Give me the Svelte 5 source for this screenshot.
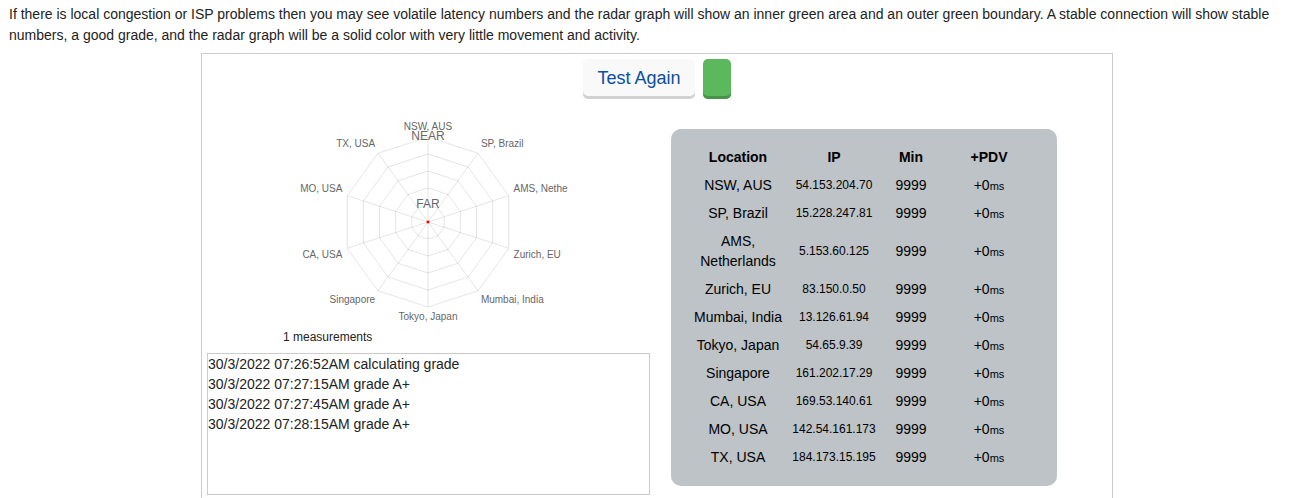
<script lang="ts">
	type Host = { name: string; ip: string; min: number; pdv: number };

	const hosts: Host[] = [
		{ name: 'NSW, AUS', ip: '54.153.204.70', min: 9999, pdv: 0 },
		{ name: 'SP, Brazil', ip: '15.228.247.81', min: 9999, pdv: 0 },
		{ name: 'AMS, Netherlands', ip: '5.153.60.125', min: 9999, pdv: 0 },
		{ name: 'Zurich, EU', ip: '83.150.0.50', min: 9999, pdv: 0 },
		{ name: 'Mumbai, India', ip: '13.126.61.94', min: 9999, pdv: 0 },
		{ name: 'Tokyo, Japan', ip: '54.65.9.39', min: 9999, pdv: 0 },
		{ name: 'Singapore', ip: '161.202.17.29', min: 9999, pdv: 0 },
		{ name: 'CA, USA', ip: '169.53.140.61', min: 9999, pdv: 0 },
		{ name: 'MO, USA', ip: '142.54.161.173', min: 9999, pdv: 0 },
		{ name: 'TX, USA', ip: '184.173.15.195', min: 9999, pdv: 0 }
	];

	let measurements = $state(1);
	let log = $state([
		'30/3/2022 07:26:52AM calculating grade',
		'30/3/2022 07:27:15AM grade A+',
		'30/3/2022 07:27:45AM grade A+',
		'30/3/2022 07:28:15AM grade A+'
	]);

	const cx = 140;
	const cy = 115;
	const radius = 85;
	const rings = [17, 34, 51, 68, 85];

	function point(i: number, r: number) {
		const angle = (i * 2 * Math.PI) / hosts.length;
		return { x: cx + r * Math.sin(angle), y: cy - r * Math.cos(angle) };
	}

	function ring(r: number) {
		return hosts.map((_, i) => `${point(i, r).x},${point(i, r).y}`).join(' ');
	}

	const labels = hosts.map((host, i) => {
		const { x, y } = point(i, radius + 5);
		const side = Math.round(x - cx);
		return {
			// long names are cut on the chart
			text: host.name.length > 13 ? host.name.slice(0, 10) : host.name,
			x,
			y: Math.round(y < cy ? y - 2 : y + 8),
			anchor: side === 0 ? 'middle' : side > 0 ? 'start' : 'end'
		} as const;
	});

	function restart() {
		measurements = 0;
		log = [];
	}
</script>

<p class="intro">
	If there is local congestion or ISP problems then you may see volatile latency numbers and the
	radar graph will show an inner green area and an outer green boundary. A stable connection will
	show stable numbers, a good grade, and the radar graph will be a solid color with very little
	movement and activity.
</p>

<div class="page">
	<main>
		<div class="actions">
			<button class="again" onclick={restart}>Test Again</button>
			<button class="grade" aria-label="Grade"></button>
		</div>
		<div class="columns">
			<section class="left">
				<div class="chart">
					<svg width="280" height="220" viewBox="0 0 280 220" role="img" aria-label="Latency radar">
						<g class="grid">
							{#each rings as r}
								<polygon points={ring(r)} />
							{/each}
							{#each hosts as _, i}
								<line x1={cx} y1={cy} x2={point(i, radius).x} y2={point(i, radius).y} />
							{/each}
						</g>
						<text class="scale" x={cx} y="33">NEAR</text>
						<text class="scale" x={cx} y="101">FAR</text>
						{#each labels as label}
							<text class="label" x={label.x} y={label.y} text-anchor={label.anchor}>{label.text}</text>
						{/each}
						<circle cx={cx} cy={cy} r="2" fill="#f99" />
						<rect x={cx - 1} y={cy - 1} width="2" height="2" fill="#d00" />
					</svg>
					<div class="count">{measurements} measurements</div>
				</div>
				<div class="log" role="log">
					{#each log as line}
						<div>{line}</div>
					{/each}
				</div>
			</section>
			<section class="card">
				<table>
					<thead>
						<tr>
							<th class="location">Location</th>
							<th class="ip">IP</th>
							<th class="min">Min</th>
							<th class="pdv">+PDV</th>
						</tr>
					</thead>
					<tbody>
						{#each hosts as host}
							<tr>
								<td>{host.name}</td>
								<td class="address">{host.ip}</td>
								<td>{host.min}</td>
								<td>+{host.pdv}<span class="unit">ms</span></td>
							</tr>
						{/each}
					</tbody>
				</table>
			</section>
		</div>
	</main>
</div>

<style>
	:global(body) {
		margin: 0;
		background: #fff;
		color: #222;
		font-family: 'Liberation Sans', Arial, sans-serif;
		font-size: 14px;
		line-height: 20px;
	}

	.intro {
		margin: 0;
		padding: 4px 9px 7px;
		line-height: 21px;
	}

	.page {
		padding-left: 19px;
	}

	main {
		box-sizing: border-box;
		max-width: 912px;
		margin: 0 auto;
		padding: 5px 5px 12px;
		border: 1px solid #ccc;
	}

	.actions {
		display: flex;
		justify-content: center;
		gap: 8px;
		margin-bottom: 8px;
	}

	button {
		height: 40px;
		padding: 0 14px 2px;
		border: none;
		border-radius: 5px;
		font-family: inherit;
		font-size: 18px;
		cursor: pointer;
	}

	.again {
		background: #f9f9f9;
		color: #0a4fa0;
		box-shadow: inset 0 -3px #d2d2d2;
	}

	.grade {
		background: #5cb85c;
		box-shadow: inset 0 -3px #4a934a;
	}

	.columns {
		display: flex;
		align-items: flex-start;
		gap: 21px;
	}

	.left {
		flex: 0 1 443px;
		min-width: 0;
	}

	.chart {
		padding-left: 76px;
		margin-bottom: 6px;
	}

	svg {
		display: block;
		margin-left: 5px;
	}

	.grid {
		fill: none;
		stroke: rgba(0, 0, 0, 0.1);
		stroke-width: 1;
	}

	.scale {
		fill: #666;
		font-size: 12px;
		text-anchor: middle;
	}

	.label {
		fill: #666;
		font-size: 10px;
	}

	.count {
		font-size: 12px;
	}

	.log {
		height: 140px;
		overflow-y: auto;
		border: 1px solid #ccc;
	}

	.card {
		box-sizing: border-box;
		margin-top: 22px;
		padding: 14px 19px 15px;
		border-radius: 10px;
		background: #bdc3c7;
		color: #000;
	}

	table {
		width: 348px;
		table-layout: fixed;
		border-collapse: collapse;
		text-align: center;
	}

	th,
	td {
		padding: 4px 0;
	}

	.location,
	.ip {
		width: 96px;
	}

	.min {
		width: 58px;
	}

	.address {
		font-size: 12px;
	}

	.unit {
		font-size: 11px;
		line-height: 1;
	}
</style>
